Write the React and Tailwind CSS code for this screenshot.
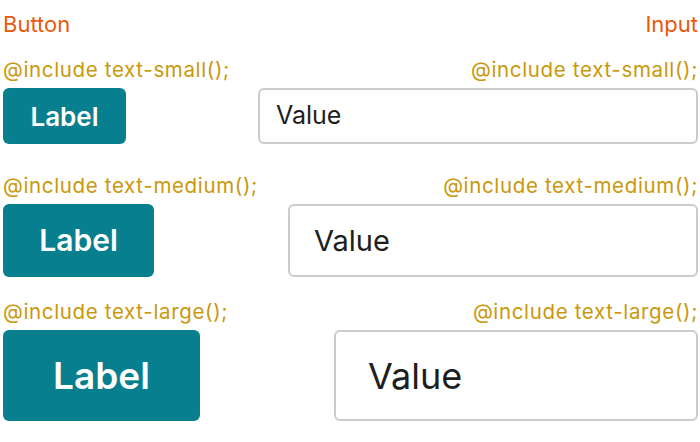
const sizes = [
  {
    name: "small",
    gap: "",
    btn: "w-[123px] h-[56px] text-[26px]",
    input: "w-[440px] h-[56px] pl-[16px] text-[25px]",
  },
  {
    name: "medium",
    gap: "mt-[30px]",
    btn: "w-[151px] h-[73px] text-[30px]",
    input: "w-[410px] h-[73px] pl-[24px] text-[29px]",
  },
  {
    name: "large",
    gap: "mt-[23px]",
    btn: "w-[197px] h-[91px] text-[37px]",
    input: "w-[364px] h-[91px] pl-[32px] text-[36px]",
  },
];

function Mixin({ name }) {
  return (
    <span className="text-[20.5px] leading-[24px] text-[#c9980c] tracking-[0.65px]">
      @include text-{name}();
    </span>
  );
}

export default function App() {
  return (
    <div
      className="w-[700px] h-[442px] bg-white pl-[3px] pr-[2px]"
      style={{ fontFamily: "Inter, 'Noto Sans', sans-serif" }}
    >
      <div className="h-[58px] pt-[12px] flex justify-between text-[22px] leading-[24px] text-[#ea580c]">
        <span>Button</span>
        <span>Input</span>
      </div>

      {sizes.map((s) => (
        <div key={s.name} className={s.gap}>
          <div className="h-[30px] flex justify-between">
            <Mixin name={s.name} />
            <Mixin name={s.name} />
          </div>
          <div className="flex justify-between">
            <button
              className={`${s.btn} rounded-[6px] bg-[#077f8e] text-white font-semibold flex items-center justify-center`}
            >
              Label
            </button>
            <div
              className={`${s.input} rounded-[6px] border-2 border-[#cccccc] bg-white text-[#1e1e1e] flex items-center`}
            >
              Value
            </div>
          </div>
        </div>
      ))}
    </div>
  );
}
